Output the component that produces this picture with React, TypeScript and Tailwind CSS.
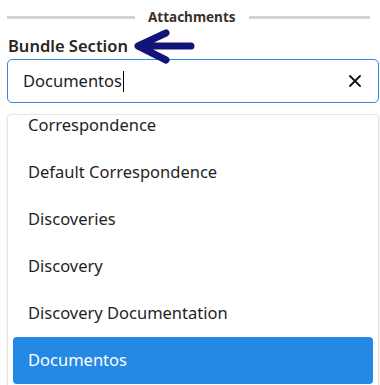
import { X } from "lucide-react";

const options = [
  "Correspondence",
  "Default Correspondence",
  "Discoveries",
  "Discovery",
  "Discovery Documentation",
  "Documentos",
];

const App = () => {
  return (
    <div className="w-[380px] h-[385px] overflow-hidden bg-white pl-[7px] pr-[1px] font-['Noto_Sans',sans-serif] text-[#222]">
      {/* section divider */}
      <div className="flex items-center pt-[8px] pr-[9px]">
        <div className="w-[128px] h-[3px] bg-[#d1d3d7]" />
        <span className="mx-[13px] text-[13.5px] font-bold leading-[18px] text-[#3a302c]">Attachments</span>
        <div className="flex-1 h-[3px] bg-[#d1d3d7]" />
      </div>

      {/* label with pointer arrow */}
      <div className="relative mt-[7px] h-[25px]">
        <span className="text-[16.5px] font-semibold leading-[25px] text-[#2b2521] pl-[1px]">Bundle Section</span>
        <svg className="absolute left-[120px] top-[-4px]" width="70" height="36" viewBox="0 0 70 36">
          <path d="M64 17 H14 M39 4 L11 17 L39 31" fill="none" stroke="#12147a" strokeWidth="7" strokeLinecap="round" strokeLinejoin="round" />
        </svg>
      </div>

      {/* search input */}
      <div className="mt-[1px] h-[44px] flex items-center border border-[#2e88de] rounded-[5px] pl-[15px] pr-[13px]">
        <span className="text-[16.5px] leading-none text-[#1c1c1c]">Documentos</span>
        <span className="w-px h-[21px] bg-black ml-[1px]" />
        <X className="ml-auto w-[20px] h-[20px] text-[#111]" strokeWidth={2.2} />
      </div>

      {/* dropdown list */}
      <div className="mt-[11px] h-[290px] border border-[#e6e6e6] rounded-[4px] shadow-sm overflow-hidden px-[5px]">
        <ul className="-mt-[13px]">
          {options.map((opt, i) => {
            const active = i === options.length - 1;
            return (
              <li
                key={opt}
                className={`h-[47px] flex items-center pl-[15px] text-[16.5px] rounded-[4px] ${
                  active ? "bg-[#2489e4] text-white" : "text-[#1f1f1f]"
                }`}
              >
                {opt}
              </li>
            );
          })}
        </ul>
      </div>
    </div>
  );
};

export default App;
